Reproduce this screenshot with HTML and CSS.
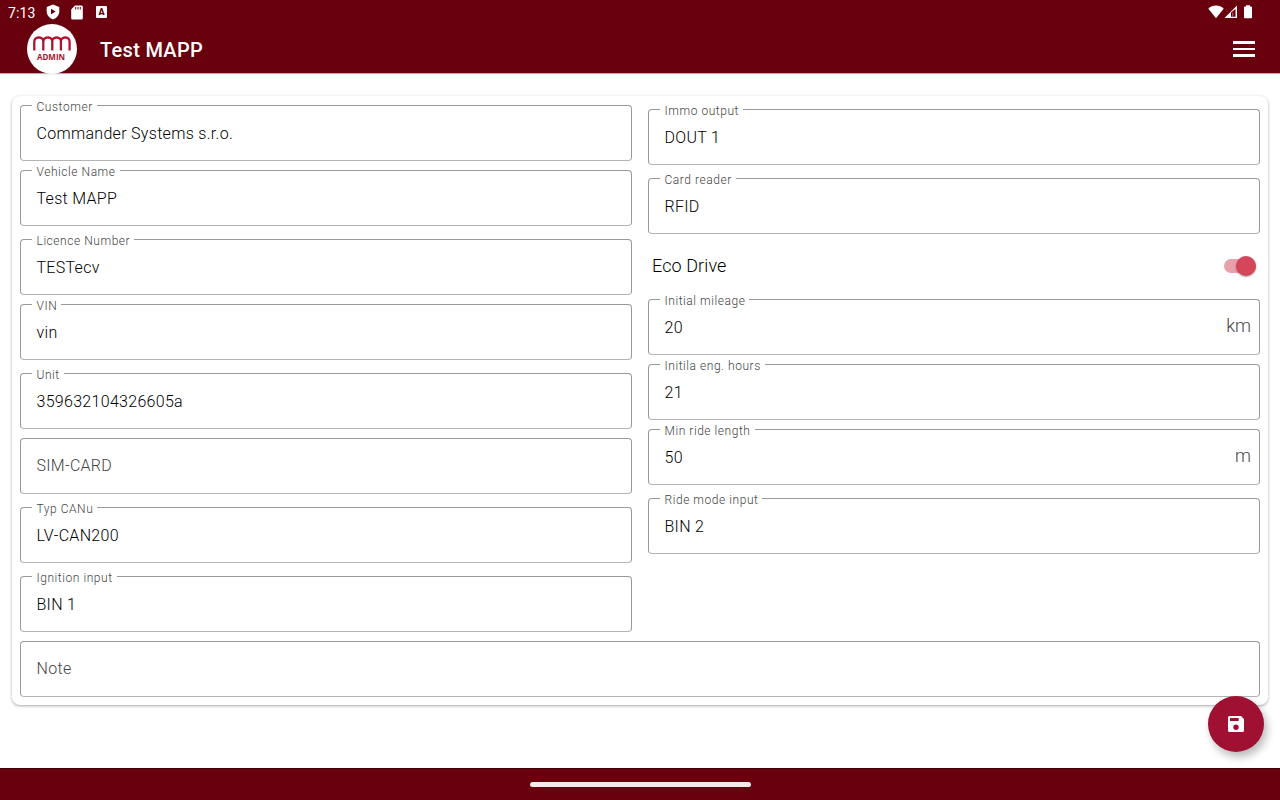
FILE: index.html
```html
<!DOCTYPE html>
<html lang="en">
<head>
  <meta charset="UTF-8">
  <title>Test MAPP</title>
  <link rel="stylesheet" href="styles.css">
</head>
<body>
  <header class="header">
    <div class="status">
      <span class="time">7:13</span>
      <svg class="st-shield" width="14" height="16" viewBox="0 0 14 16"><path d="M7 0.5L13.3 3v4.6c0 3.600-2.600 6.600-6.300 7.900C3.300 14.200.7 11.200.7 7.600V3z" fill="#fff"/><path d="M5 4.700v5.800l4.600-2.900z" fill="#69000e"/></svg>
      <svg class="st-sd" width="12" height="15" viewBox="0 0 12 15"><path d="M4 0.500h6.500A1.300 1.300 0 0 1 11.800 1.800v11.400a1.300 1.300 0 0 1-1.300 1.300h-9A1.300 1.300 0 0 1 .2 13.200V4.500z" fill="#fff"/><path d="M4.700 2v2.500M7 2v2.500M9.300 2v2.500" stroke="#69000e" stroke-width="1"/></svg>
      <span class="st-a">A</span>
      <svg class="st-right" width="46" height="14" viewBox="0 0 46 14">
        <path d="M0.300 3.800C4.700-.5 11.300-.5 15.700 3.800L8 13.300z" fill="#fff"/>
        <path d="M29 0.500V13H16.500z" fill="#fff"/><path d="M23 7.500L27.500 4v7.700H23z" fill="#69000e"/><path d="M24.300 7.500h.9v4.200h-.9z" fill="#b98088"/>
        <path d="M38 .3h4v1.200h1.200a.8.800 0 0 1 .8.800v10.200a.8.800 0 0 1-.8.800h-6.400a.8.800 0 0 1-.8-.8V2.300a.8.800 0 0 1 .8-.8H38z" fill="#fff"/>
      </svg>
    </div>
    <div class="toolbar">
      <div class="logo">
        <svg width="38" height="16" viewBox="0 0 38 16"><path d="M1.300 14.500V5.500a4 4 0 0 1 4-4h1a4 4 0 0 1 4 4v9M10.300 5.500a4 4 0 0 1 4-4h1a4 4 0 0 1 4 4v9M19.300 5.500a4 4 0 0 1 4-4h.6a4 4 0 0 1 4 4v9M27.900 5.500a4 4 0 0 1 4-4h.7a4 4 0 0 1 4 4v9" fill="none" stroke="#b3122f" stroke-width="2.300"/></svg>
        <span>ADMIN</span>
      </div>
      <h1 class="title">Test MAPP</h1>
      <div class="menu"><i></i><i></i><i></i></div>
    </div>
  </header>

  <main class="card">
    <div class="columns">
      <div class="col">
        <div class="field"><label>Customer</label><span>Commander Systems s.r.o.</span></div>
        <div class="field"><label>Vehicle Name</label><span>Test MAPP</span></div>
        <div class="field wide-gap"><label>Licence Number</label><span>TESTecv</span></div>
        <div class="field"><label>VIN</label><span>vin</span></div>
        <div class="field wide-gap"><label>Unit</label><span>359632104326605a</span></div>
        <div class="field empty"><span>SIM-CARD</span></div>
        <div class="field wide-gap"><label>Typ CANu</label><span>LV-CAN200</span></div>
        <div class="field wide-gap"><label>Ignition input</label><span>BIN 1</span></div>
      </div>
      <div class="col col-right">
        <div class="field"><label>Immo output</label><span>DOUT 1</span></div>
        <div class="field wide-gap"><label>Card reader</label><span>RFID</span></div>
        <div class="switch-row"><span>Eco Drive</span><div class="switch"></div></div>
        <div class="field"><label>Initial mileage</label><span>20</span><em>km</em></div>
        <div class="field"><label>Initila eng. hours</label><span>21</span></div>
        <div class="field"><label>Min ride length</label><span>50</span><em>m</em></div>
        <div class="field wide-gap"><label>Ride mode input</label><span>BIN 2</span></div>
      </div>
    </div>
    <div class="field empty note"><span>Note</span></div>
  </main>

  <div class="fab">
    <svg width="24" height="24" viewBox="0 0 24 24"><path d="M17 4H5.500A1.500 1.500 0 0 0 4 5.500v13A1.500 1.500 0 0 0 5.500 20h13a1.500 1.500 0 0 0 1.500-1.500V7zM12 18a2.700 2.700 0 1 1 0-5.400 2.700 2.700 0 0 1 0 5.400zM14.700 9H6V6h8.700z" fill="#fff"/></svg>
  </div>

  <footer class="navbar"><div class="handle"></div></footer>
</body>
</html>
```
FILE: styles.css
```css
*{box-sizing:border-box;margin:0;padding:0;}

body{width:1280px;height:800px;overflow:hidden;display:flex;flex-direction:column;background:#fff;font-family:Roboto,"Liberation Sans",sans-serif;color:#000;position:relative;}

/* header */
.header{height:73px;background:#69000e;box-shadow:0 1px 1px rgba(0,0,0,.3);color:#fff;flex:none;}
.status{height:24px;display:flex;align-items:center;padding:0 26px 0 8px;}
.time{font-size:14px;width:38px;letter-spacing:.1px;padding-top:1px;}
.st-sd{margin-left:11px;}
.st-a{margin-left:13px;width:11px;height:12px;background:#fff;border-radius:1px;color:#69000e;font-size:9px;font-weight:900;line-height:12px;text-align:center;}
.st-right{margin-left:auto;}
.toolbar{height:50px;display:flex;align-items:center;padding:0 25px 0 27px;}
.logo{width:50px;height:50px;border-radius:50%;background:#fff;display:flex;flex-direction:column;align-items:center;padding-top:12px;}
.logo span{font-family:"Open Sans",sans-serif;font-size:8px;line-height:10px;font-weight:700;color:#a51631;margin-top:0;margin-right:2px;}
.title{font-size:20px;font-weight:500;line-height:24px;letter-spacing:.3px;margin-left:23px;padding-top:1px;}
.menu{margin-left:auto;width:22px;display:flex;flex-direction:column;gap:4px;}
.menu i{height:2.400px;background:#fff;}

/* form */
.card{margin:23px 12px 0;height:609px;padding:9px 8px 0;border-radius:8px;background:#fff;box-shadow:0 1px 3px rgba(0,0,0,.35);}
.columns{display:flex;gap:16px;}
.col{flex:1;display:flex;flex-direction:column;gap:9px;}
.col-right{padding-top:4px;}
.field{position:relative;height:56px;border:1px solid #999;border-bottom-color:#b4b4b4;border-radius:4px;padding:0 8px 0 15.500px;display:flex;align-items:center;justify-content:space-between;font-size:16px;font-weight:300;letter-spacing:.3px;}
.field label{position:absolute;left:11px;top:-7px;padding:0 4px 0 4.500px;background:#fff;font-size:12px;line-height:16px;letter-spacing:.55px;color:#444;white-space:nowrap;}
.field em{font-style:normal;font-size:18px;letter-spacing:0;color:#444;padding-bottom:3px;}
.wide-gap{margin-top:4px;}
.empty{color:#444;padding-bottom:1px;}
.note{margin-top:9px;}
.switch-row{height:47px;display:flex;align-items:center;justify-content:space-between;padding:0 4px 2px;font-size:18px;font-weight:300;letter-spacing:.1px;}
.switch{width:32px;height:14px;border-radius:7px;background:#e9a0aa;position:relative;}
.switch::after{content:"";position:absolute;right:0;top:-3px;width:20px;height:20px;border-radius:50%;background:#d44659;box-shadow:0 1px 2px rgba(0,0,0,.35);}

.fab{position:absolute;left:1208px;top:696px;width:56px;height:56px;border-radius:50%;background:#a01033;box-shadow:3px 5px 8px rgba(0,0,0,.28);display:flex;align-items:center;justify-content:center;}

/* system navigation */
.navbar{margin-top:auto;height:32px;background:#69000e;border-top:1px solid #3c0008;display:flex;align-items:center;justify-content:center;padding-bottom:1px;}
.handle{width:221px;height:5px;border-radius:3px;background:#f3eaeb;}
```
